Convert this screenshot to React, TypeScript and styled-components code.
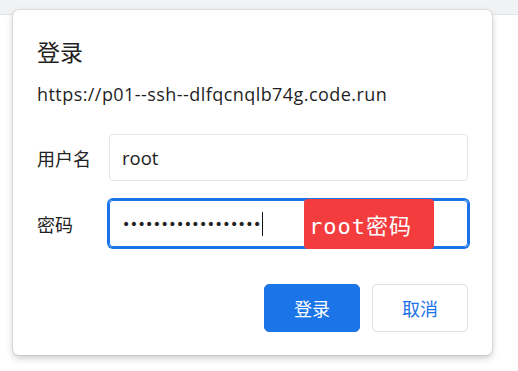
import {FC} from 'react'
import styled, {createGlobalStyle} from 'styled-components'

const GlobalStyle = createGlobalStyle`
  html, body {
    margin: 0;
    padding: 0;
    background: #ffffff;
  }
  body {
    font-family: "Open Sans", "Noto Sans CJK SC", sans-serif;
    color: #222;
  }
`

const Page = styled.div`
  position: relative;
  width: 518px;
  height: 371px;
  overflow: hidden;
  background: #fff;
`

const TopBar = styled.div`
  height: 14px;
  background: #f1f2f4;
  border-bottom: 1px solid #e3e4e6;
`

const Dialog = styled.div`
  position: absolute;
  left: 13px;
  top: 10px;
  width: 479px;
  box-sizing: border-box;
  padding: 27px 24px 23px;
  background: #fff;
  border-radius: 6px;
  box-shadow: 0 0 0 1px rgba(0, 0, 0, 0.06), 0 3px 7px rgba(0, 0, 0, 0.22);
`

const Title = styled.h2`
  margin: 0;
  font-size: 23px;
  font-weight: 400;
  line-height: 30px;
  color: #1f1f1f;
`

const Url = styled.div`
  margin-top: 15px;
  font-size: 18px;
  letter-spacing: 0.44px;
  line-height: 24px;
  color: #1f1f1f;
`

const Form = styled.div`
  margin-top: 28px;
  display: flex;
  flex-direction: column;
  gap: 19px;
`

const Row = styled.div`
  display: grid;
  grid-template-columns: 72px 1fr;
  align-items: center;
`

const Label = styled.span`
  font-size: 18px;
  color: #222;
`

const Field = styled.div<{$focused?: boolean}>`
  position: relative;
  height: 47px;
  box-sizing: border-box;
  display: flex;
  align-items: center;
  padding: 0 12px;
  border: 1px solid ${p => (p.$focused ? '#1b73e8' : '#e4e6ea')};
  border-radius: 4px;
  box-shadow: ${p => (p.$focused ? '0 0 0 2px #1b73e8' : 'none')};
  font-size: 18.5px;
  color: #222;
`

const Dots = styled.span`
  font-family: "DejaVu Sans", sans-serif;
  font-size: 14px;
  letter-spacing: -0.55px;
  color: #222;
`

const Caret = styled.span`
  display: inline-block;
  width: 1px;
  height: 24px;
  margin-left: 1px;
  background: #111;
`

const Hint = styled.div`
  position: absolute;
  left: 194px;
  top: -2px;
  width: 130px;
  height: 50px;
  box-sizing: border-box;
  padding-left: 5px;
  display: flex;
  align-items: center;
  background: #f33c3e;
  border-radius: 4px;
  color: #fff;
  font-family: "DejaVu Sans Mono", "Noto Sans CJK SC", monospace;
  font-size: 22px;
  letter-spacing: 1px;
`

const Actions = styled.div`
  margin-top: 37px;
  display: flex;
  justify-content: flex-end;
  gap: 12px;
`

const Button = styled.button<{$primary?: boolean}>`
  width: 96px;
  height: 48px;
  border-radius: 5px;
  font-family: "Open Sans", "Noto Sans CJK SC", sans-serif;
  font-size: 18px;
  cursor: pointer;
  background: ${p => (p.$primary ? '#1c74e9' : '#fff')};
  color: ${p => (p.$primary ? '#fff' : '#1c74e9')};
  border: 1px solid ${p => (p.$primary ? '#1c74e9' : '#dcdfe4')};
`

const App: FC = () => {
  return (
    <Page>
      <GlobalStyle />
      <TopBar />
      <Dialog>
        <Title>登录</Title>
        <Url>https://p01--ssh--dlfqcnqlb74g.code.run</Url>
        <Form>
          <Row>
            <Label>用户名</Label>
            <Field>root</Field>
          </Row>
          <Row>
            <Label>密码</Label>
            <Field $focused>
              <Dots>{'•'.repeat(18)}</Dots>
              <Caret />
              <Hint>root密码</Hint>
            </Field>
          </Row>
        </Form>
        <Actions>
          <Button $primary>登录</Button>
          <Button>取消</Button>
        </Actions>
      </Dialog>
    </Page>
  )
}

export default App
